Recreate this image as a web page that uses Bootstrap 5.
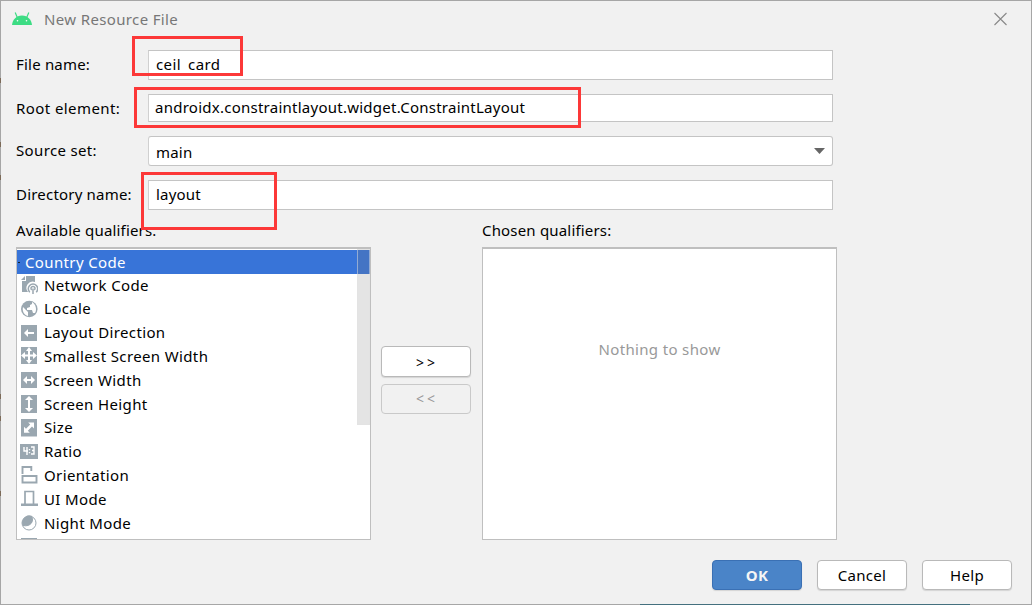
<!DOCTYPE html>
<html lang="en">
<head>
<meta charset="utf-8">
<meta name="viewport" content="width=device-width, initial-scale=1">
<title>New Resource File</title>
<link href="https://cdn.jsdelivr.net/npm/bootstrap@5.3.0/dist/css/bootstrap.min.css" rel="stylesheet">
<style>
body{background:#f1f1f1;font-family:"Noto Sans","Open Sans",sans-serif;font-size:15px;line-height:20px;color:#000;overflow:hidden}
.dialog{width:1032px;height:605px;border:1px solid #a6a6a6}
.titlebar{height:37px;padding:0 21px 0 11px;color:#777}
.titlebar span{margin-left:12px;letter-spacing:.36px;position:relative;top:-1px}
.titlebar svg{position:relative;top:-1px}
.form-grid{display:grid;grid-template-columns:132px 685px;grid-template-rows:30px 28px 30px 30px;row-gap:14px;padding:12px 0 0 15px}
.form-grid .field-label{align-self:center;white-space:nowrap;position:relative;letter-spacing:.2px}
.form-grid .form-control,.form-grid .source{height:100%;min-height:0;padding:0 7px;border:1px solid #c4c4c4;border-left-color:#d0d0d0;border-radius:0;font-size:15px;line-height:26px;color:#000;background:#fff;letter-spacing:.2px}
.form-grid .source{border-radius:3px;padding-right:7px;line-height:28px}
.form-grid .source span{position:relative;top:1px}
.form-grid .root-el{padding-left:6px;letter-spacing:.25px;line-height:25px}
.up{top:-1px}
.low{position:relative;top:2px}
.heads{padding:10px 0 0 15px;height:37px;letter-spacing:.18px}
.heads>div{width:466px}
.lists{padding-left:15px;height:293px}
.pane{width:355px;height:293px;background:#fff;border:1px solid #bfbfbf;border-top-width:2px;overflow:hidden}
.pane .list-group-item{height:23.8px;flex:none;padding:0 0 0 4px;border:0;background:transparent;color:#000;gap:6px;line-height:23px;letter-spacing:.37px}
.pane .list-group-item.picked{height:24px;margin-top:1px;background:#3874d8;color:#fff;padding-left:8px;line-height:25px}
.pane .picked + .list-group-item{margin-top:-.8px}
.pane svg{flex:none;width:17px;height:18px}
.pane .empty-note{padding-top:90px;color:#999;letter-spacing:.35px}
.thumb{right:0;top:0;width:13px;height:176px;background:rgba(120,120,120,.2);border:1px solid rgba(225,225,225,.5)}
.tick{left:1px;top:12px;width:2px;height:1px;background:#123}
.movers{width:111px;padding:99px 10px 0 10px;gap:7px}
.btn.dlg{width:90px;height:30px;padding:0;border:1px solid #b9b9b9;border-radius:4px;background:#fff;color:#000;font-size:15px;line-height:28px;letter-spacing:.3px;box-shadow:0 1px 1px rgba(0,0,0,.12)}
.btn.dlg.tall{height:31px;line-height:31px}
.btn.dlg:disabled{background:#f1f1f1;color:#999;border-color:#c9c9c9;opacity:1;box-shadow:none}
.btn.dlg.ok{background:#4a84c8;border-color:#3a70b4;color:#f5f5f5;font-weight:700}
.movers .btn.dlg{font-size:14px;letter-spacing:3px;padding-left:2px}
.actions{padding:20px 19px 0 0;gap:15px}
.callout{position:absolute;border:3px solid #fc3838}
.edge{position:absolute;left:-1px;width:1px;height:5px;background:#7c6a58}
.under{position:absolute;left:639px;top:603px;width:330px;height:1px;background:#44707e}
</style>
</head>
<body>
<div class="dialog position-relative d-flex flex-column">
  <header class="titlebar d-flex align-items-center justify-content-between">
    <div class="d-flex align-items-center">
      <svg width="20" height="13" viewBox="0 0 20 13"><path d="M0 13C.4 8 4 3.500 10 3.500s9.600 4.500 10 9.500z" fill="#3ddc84"/><path d="M5.500 6L3.200.6M14.500 6l2.300-5.400" stroke="#3ddc84" stroke-width="1.200"/><circle cx="5.500" cy="8.800" r=".8" fill="#fff"/><circle cx="14.500" cy="8.800" r=".8" fill="#fff"/></svg>
      <span>New Resource File</span>
    </div>
    <svg width="19" height="14" viewBox="0 0 19 14"><path d="M3.500 1l12 12m0-12l-12 12" stroke="#888" stroke-width="1.100"/></svg>
  </header>
  <div class="form-grid">
    <span class="field-label up">File name:</span><div class="form-control" style="letter-spacing:.4px">ceil<span class="low">_</span>card</div>
    <span class="field-label" style="letter-spacing:.42px">Root element:</span><div class="form-control root-el">androidx.constraintlayout.widget.ConstraintLayout</div>
    <span class="field-label up" style="letter-spacing:.35px">Source set:</span>
    <div class="source d-flex align-items-center justify-content-between"><span>main</span><svg width="11" height="6"><path d="M0 0h11L5.500 6z" fill="#666"/></svg></div>
    <span class="field-label up">Directory name:</span><div class="form-control">layout</div>
  </div>
  <div class="heads d-flex"><div>Available qualifiers:</div><div>Chosen qualifiers:</div></div>
  <div class="lists d-flex">
    <div class="pane position-relative">
      <div class="list-group list-group-flush">
        <div class="list-group-item picked position-relative"><span class="tick position-absolute"></span>Country Code</div>
        <div class="list-group-item d-flex align-items-center"><svg viewBox="0 0 17 18"><path d="M5 0h9v6a6.300 6.300 0 0 0-7 10H1V5h4zM4 0v4H0z" fill="#9aa7b0"/><path d="M8.800 16.200a4.700 4.700 0 1 1 6.400 0M10.700 14a2 2 0 1 1 2.600 0M12 12.500V18" fill="none" stroke="#9aa7b0" stroke-width="1.500"/></svg><span>Network Code</span></div>
        <div class="list-group-item d-flex align-items-center"><svg viewBox="0 0 17 18"><circle cx="8.300" cy="9" r="8.300" fill="#9aa7b0"/><path d="M2 7l5 5v4C3 15 1 11 2 7zM11 2v2L9 5v2L6 8v2h5l1 3h2c2-3 1-9-3-11z" fill="#fff"/></svg><span>Locale</span></div>
        <div class="list-group-item d-flex align-items-center"><svg viewBox="0 0 17 18"><path d="M0 1h16v16H0z" fill="#9aa7b0"/><path d="M3 9l4-4v3h6v2H7v3z" fill="#fff"/></svg><span>Layout Direction</span></div>
        <div class="list-group-item d-flex align-items-center"><svg viewBox="0 0 17 18"><path d="M0 0h16v17H0z" fill="#9aa7b0"/><path d="M8 0l3 4H9v3.500h3V5l4 3.500-4 3.500V9.500H9V13h2l-3 4-3-4h2V9.500H4V12L0 8.500 4 5v2.500h3V4H5z" fill="#fff"/></svg><span>Smallest Screen Width</span></div>
        <div class="list-group-item d-flex align-items-center"><svg viewBox="0 0 17 18"><path d="M0 1h16v16H0z" fill="#9aa7b0"/><path d="M2 9l4-4v3h4V5l4 4-4 4v-3H6v3z" fill="#fff"/></svg><span>Screen Width</span></div>
        <div class="list-group-item d-flex align-items-center"><svg viewBox="0 0 17 18"><path d="M0 0h16v18H0z" fill="#9aa7b0"/><path d="M8 1l4 4H9v8h3l-4 4-4-4h3V5H4z" fill="#fff"/></svg><span>Screen Height</span></div>
        <div class="list-group-item d-flex align-items-center"><svg viewBox="0 0 17 18"><path d="M0 0h16v17.500H0z" fill="#9aa7b0"/><path d="M13 3.500v6l-2-2-4.200 4.200 2 2H3v-6l2 2 4.200-4.200-2-2z" fill="#fff"/></svg><span>Size</span></div>
        <div class="list-group-item d-flex align-items-center"><svg viewBox="0 0 17 18" overflow="visible"><path d="M-1 1h18v15H-1z" fill="#9aa7b0"/><path d="M3 4v4h4M6 4v8M10 4h3v7h-3M11 7.500h2M8.500 6v1.200M8.500 9v1.200" fill="none" stroke="#fff" stroke-width="1.400"/></svg><span>Ratio</span></div>
        <div class="list-group-item d-flex align-items-center"><svg viewBox="0 0 17 18"><path d="M1.500 8V1h8.800v4M1.500 10h14v6.500h-14z" fill="none" stroke="#9aa7b0" stroke-width="1.900"/></svg><span>Orientation</span></div>
        <div class="list-group-item d-flex align-items-center"><svg viewBox="0 0 17 18"><path d="M4 14V1.500h8.500V14" fill="none" stroke="#9aa7b0" stroke-width="1.700"/><path d="M0 13.500h17V16H0z" fill="#9aa7b0"/></svg><span>UI Mode</span></div>
        <div class="list-group-item d-flex align-items-center"><svg viewBox="0 0 17 18"><circle cx="8" cy="9" r="7" fill="#fff" stroke="#9aa7b0"/><path d="M10.500 2.200c3 5-1 11-8.500 9.300A7 7 0 0 1 10.500 2.200z" fill="#9aa7b0" stroke="#9aa7b0"/></svg><span>Night Mode</span></div>
        <div class="list-group-item d-flex align-items-center"><svg viewBox="0 0 17 18"><path d="M0 0h16v17H0z" fill="#9aa7b0"/></svg></div>
      </div>
      <div class="thumb position-absolute"></div>
    </div>
    <div class="movers d-flex flex-column"><button class="btn dlg tall">&gt;&gt;</button><button class="btn dlg" disabled>&lt;&lt;</button></div>
    <div class="pane text-center"><div class="empty-note">Nothing to show</div></div>
  </div>
  <footer class="actions d-flex justify-content-end"><button class="btn dlg ok">OK</button><button class="btn dlg">Cancel</button><button class="btn dlg">Help</button></footer>
  <div class="callout" style="left:131px;top:35px;width:111px;height:40px"></div>
  <div class="callout" style="left:133px;top:86px;width:447px;height:41px"></div>
  <div class="callout" style="left:140px;top:171px;width:136px;height:58px"></div>
  <i class="edge" style="top:77px"></i><i class="edge" style="top:141px"></i><i class="edge" style="top:174px"></i><i class="edge" style="top:393px"></i><i class="edge" style="top:415px"></i><i class="edge" style="top:490px"></i>
  <i class="under"></i>
</div>
</body>
</html>
